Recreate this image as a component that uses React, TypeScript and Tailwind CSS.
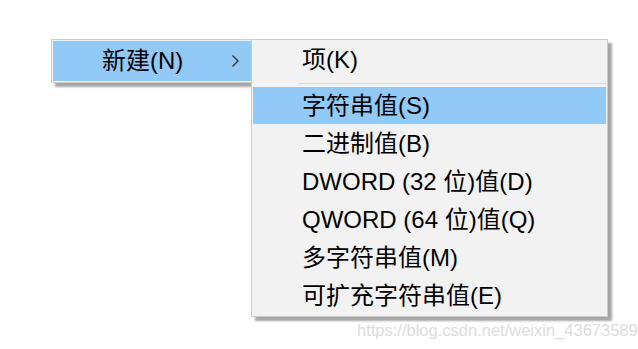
const font = "font-['Liberation_Sans','Noto_Sans_CJK_SC',sans-serif]";

const subItems = [
  "二进制值(B)",
  "DWORD (32 位)值(D)",
  "QWORD (64 位)值(Q)",
  "多字符串值(M)",
  "可扩充字符串值(E)",
];

export default function App() {
  return (
    <div className={`w-[638px] h-[349px] bg-white overflow-hidden ${font} text-[24px] leading-none text-black`}>
      <div className="flex items-start pt-[39px] pl-[51px]">
        {/* Parent menu */}
        <div className="w-[202px] h-[44px] p-[1px] bg-[#f2f2f2] border border-[#cccccc] shadow-[4px_4px_2px_rgba(0,0,0,0.35)]">
          <div className="h-full bg-[#91c9f7] flex items-center pl-[49px] pr-[10px]">
            <span className="flex-1">新建(N)</span>
            <svg width="9" height="14" viewBox="0 0 9 14" className="mr-[1px]">
              <path d="M1.5 1.5 L7 7 L1.5 12.5" fill="none" stroke="#333" strokeWidth="1.4" />
            </svg>
          </div>
        </div>

        {/* Submenu */}
        <div className="relative z-10 -ml-[2px] w-[357px] h-[278px] bg-[#f2f2f2] border border-[#cccccc] p-[1px] shadow-[4px_4px_2px_rgba(0,0,0,0.35)]">
          <div className="h-[38px] flex items-center pl-[49px]">项(K)</div>
          <div className="h-[8px] flex items-center pl-[45px]">
            <div className="w-full h-px bg-[#d7d7d7]" />
          </div>
          <div className="h-[37px] mb-px bg-[#91c9f7] flex items-center pl-[49px]">字符串值(S)</div>
          {subItems.map((t) => (
            <div key={t} className="h-[38px] flex items-center pl-[49px]">
              {t}
            </div>
          ))}
        </div>
      </div>

      <div className="pl-[357px] mt-[3px] text-[16.5px] leading-[20px] text-[#dddddd] font-['Liberation_Sans',sans-serif]">
        https://blog.csdn.net/weixin_43673589
      </div>
    </div>
  );
}
